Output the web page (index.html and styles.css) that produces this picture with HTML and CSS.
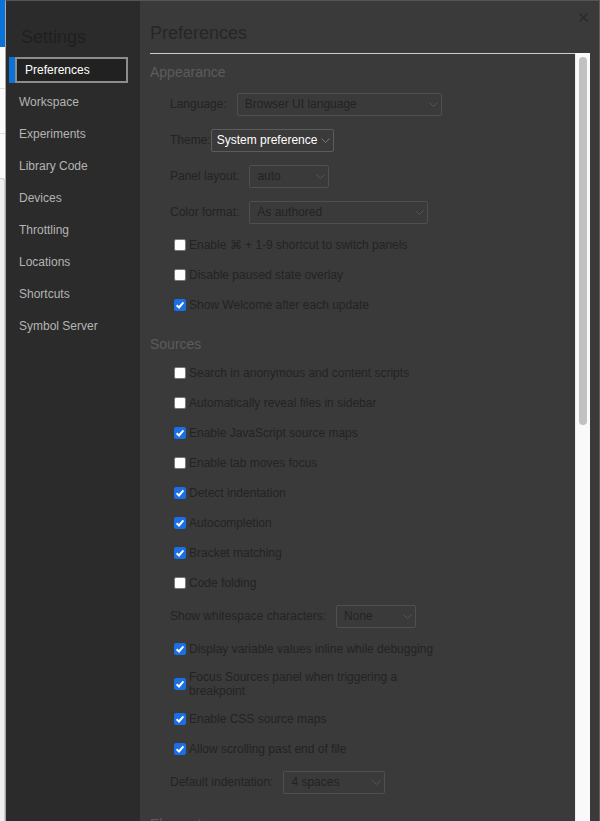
FILE: index.html
```html
<!DOCTYPE html>
<html lang="en">
<head>
<meta charset="utf-8">
<title>Settings</title>
<link rel="stylesheet" href="styles.css">
</head>
<body>
<div class="page-edge">
  <div class="edge-blue"></div>
  <div class="edge-rule"></div>
  <div class="edge-rule second"></div>
  <div class="edge-card"></div>
</div>
<div class="dialog">
  <nav class="sidebar">
    <div class="sidebar-title">Settings</div>
    <div class="nav-item selected"><span class="sel-bar"></span><span class="sel-box">Preferences</span></div>
    <div class="nav-item">Workspace</div>
    <div class="nav-item">Experiments</div>
    <div class="nav-item">Library Code</div>
    <div class="nav-item">Devices</div>
    <div class="nav-item">Throttling</div>
    <div class="nav-item">Locations</div>
    <div class="nav-item">Shortcuts</div>
    <div class="nav-item">Symbol Server</div>
  </nav>
  <main class="main">
    <div class="close" aria-label="Close">
      <svg width="9" height="9" viewBox="0 0 9 9"><path d="M0.5 0.5 L8.5 8.5 M8.5 0.5 L0.5 8.5" fill="none" stroke="currentColor" stroke-width="1.1"/></svg>
    </div>
    <h1 class="main-title">Preferences</h1>
    <div class="main-body">
      <div class="content">
        <section class="section">
          <h2 class="section-title">Appearance</h2>
          <div class="field"><span>Language:</span><div class="select sel-lang"><span>Browser UI language</span><svg width="9" height="5" viewBox="0 0 9 5"><path d="M0.5 0.5 L4.5 4.5 L8.5 0.5" fill="none" stroke="currentColor"/></svg></div></div>
          <div class="field tight"><span>Theme:</span><div class="select active sel-theme"><span>System preference</span><svg width="9" height="5" viewBox="0 0 9 5"><path d="M0.5 0.5 L4.5 4.5 L8.5 0.5" fill="none" stroke="currentColor"/></svg></div></div>
          <div class="field"><span>Panel layout:</span><div class="select sel-panel"><span>auto</span><svg width="9" height="5" viewBox="0 0 9 5"><path d="M0.5 0.5 L4.5 4.5 L8.5 0.5" fill="none" stroke="currentColor"/></svg></div></div>
          <div class="field"><span>Color format:</span><div class="select sel-color"><span>As authored</span><svg width="9" height="5" viewBox="0 0 9 5"><path d="M0.5 0.5 L4.5 4.5 L8.5 0.5" fill="none" stroke="currentColor"/></svg></div></div>
          <div class="check-row"><span class="cb"></span><span class="check-label">Enable ⌘ + 1-9 shortcut to switch panels</span></div>
          <div class="check-row"><span class="cb"></span><span class="check-label">Disable paused state overlay</span></div>
          <div class="check-row"><span class="cb on"><svg width="10" height="10" viewBox="0 0 10 10"><path d="M1.6 5.2 L4 7.5 L8.4 2.4" fill="none" stroke="#fff" stroke-width="2"/></svg></span><span class="check-label">Show Welcome after each update</span></div>
        </section>
        <section class="section">
          <h2 class="section-title">Sources</h2>
          <div class="check-row"><span class="cb"></span><span class="check-label">Search in anonymous and content scripts</span></div>
          <div class="check-row"><span class="cb"></span><span class="check-label">Automatically reveal files in sidebar</span></div>
          <div class="check-row"><span class="cb on"><svg width="10" height="10" viewBox="0 0 10 10"><path d="M1.6 5.2 L4 7.5 L8.4 2.4" fill="none" stroke="#fff" stroke-width="2"/></svg></span><span class="check-label">Enable JavaScript source maps</span></div>
          <div class="check-row"><span class="cb"></span><span class="check-label">Enable tab moves focus</span></div>
          <div class="check-row"><span class="cb on"><svg width="10" height="10" viewBox="0 0 10 10"><path d="M1.6 5.2 L4 7.5 L8.4 2.4" fill="none" stroke="#fff" stroke-width="2"/></svg></span><span class="check-label">Detect indentation</span></div>
          <div class="check-row"><span class="cb on"><svg width="10" height="10" viewBox="0 0 10 10"><path d="M1.6 5.2 L4 7.5 L8.4 2.4" fill="none" stroke="#fff" stroke-width="2"/></svg></span><span class="check-label">Autocompletion</span></div>
          <div class="check-row"><span class="cb on"><svg width="10" height="10" viewBox="0 0 10 10"><path d="M1.6 5.2 L4 7.5 L8.4 2.4" fill="none" stroke="#fff" stroke-width="2"/></svg></span><span class="check-label">Bracket matching</span></div>
          <div class="check-row"><span class="cb"></span><span class="check-label">Code folding</span></div>
          <div class="field"><span>Show whitespace characters:</span><div class="select sel-ws"><span>None</span><svg width="9" height="5" viewBox="0 0 9 5"><path d="M0.5 0.5 L4.5 4.5 L8.5 0.5" fill="none" stroke="currentColor"/></svg></div></div>
          <div class="check-row"><span class="cb on"><svg width="10" height="10" viewBox="0 0 10 10"><path d="M1.6 5.2 L4 7.5 L8.4 2.4" fill="none" stroke="#fff" stroke-width="2"/></svg></span><span class="check-label">Display variable values inline while debugging</span></div>
          <div class="check-row"><span class="cb on"><svg width="10" height="10" viewBox="0 0 10 10"><path d="M1.6 5.2 L4 7.5 L8.4 2.4" fill="none" stroke="#fff" stroke-width="2"/></svg></span><span class="check-label">Focus Sources panel when triggering a breakpoint</span></div>
          <div class="check-row"><span class="cb on"><svg width="10" height="10" viewBox="0 0 10 10"><path d="M1.6 5.2 L4 7.5 L8.4 2.4" fill="none" stroke="#fff" stroke-width="2"/></svg></span><span class="check-label">Enable CSS source maps</span></div>
          <div class="check-row"><span class="cb on"><svg width="10" height="10" viewBox="0 0 10 10"><path d="M1.6 5.2 L4 7.5 L8.4 2.4" fill="none" stroke="#fff" stroke-width="2"/></svg></span><span class="check-label">Allow scrolling past end of file</span></div>
          <div class="field"><span>Default indentation:</span><div class="select sel-indent"><span>4 spaces</span><svg width="9" height="5" viewBox="0 0 9 5"><path d="M0.5 0.5 L4.5 4.5 L8.5 0.5" fill="none" stroke="currentColor"/></svg></div></div>
        </section>
        <section class="section">
          <h2 class="section-title">Elements</h2>
        </section>
      </div>
      <div class="track"><div class="thumb"></div></div>
    </div>
  </main>
</div>
</body>
</html>
```
FILE: styles.css
```css
* { box-sizing: border-box; }
html, body { margin: 0; padding: 0; }
body {
  display: flex;
  height: 821px;
  overflow: hidden;
  font-family: "Liberation Sans", Arial, sans-serif;
  font-size: 12px;
  background: #3a3a3a;
}
.page-edge { width: 5px; flex: none; background: #fbfbfb; display: flex; flex-direction: column; }
.edge-blue { height: 47px; background: #0a72d8; }
.edge-rule { height: 42px; border-bottom: 1px solid #dcdcdc; }
.edge-rule.second { height: 45px; }
.edge-card { flex: 1; margin-top: 44px; background: #f0f0f0; border-top: 1px solid #cfcfcf; border-right: 1px solid #cfcfcf; border-top-right-radius: 3px; }

.dialog {
  flex: 1;
  display: flex;
  min-width: 0;
  border-top: 1px solid #555;
  border-left: 1px solid #a8a8a8;
  border-right: 1px solid #5e5e5e;
}
.sidebar { width: 134px; flex: none; background: #2b2b2b; }
.sidebar-title { padding: 25px 0 6px 15px; font-size: 18px; line-height: 22px; color: #1f1f1f; }
.nav-item { height: 32px; display: flex; align-items: center; padding-left: 13px; color: #b4b4b4; }
.nav-item.selected { padding: 3px 12px 3px 3px; align-items: stretch; }
.sel-bar { width: 6px; background: #0a72d8; }
.sel-box { flex: 1; display: flex; align-items: center; border: 2px solid #8d8d8d; background: #212121; color: #fff; padding-left: 8px; }

.main { flex: 1; position: relative; display: flex; flex-direction: column; min-width: 0; padding: 0 9px 0 10px; background: #3a3a3a; }
.close { position: absolute; top: 12px; right: 11px; width: 9px; height: 9px; color: #282828; display: flex; }
.main-title { margin: 0; height: 52px; padding-top: 21px; font-size: 18px; line-height: 22px; font-weight: normal; color: #262626; }
.main-body { flex: 1; display: flex; min-height: 0; }
.content { flex: 1; border-top: 1px solid #cdcdcd; padding-top: 9px; overflow: hidden; }
.track { width: 15px; flex: none; background: #f9f9f9; border-left: 1px solid #ececec; padding: 4px 0 0 3px; }
.thumb { width: 8px; height: 368px; border-radius: 4px; background: #c1c1c1; }

.section-title { margin: 0 0 5px; font-size: 14px; line-height: 18px; font-weight: normal; color: #5c5c5c; }
.section + .section .section-title { margin-top: 15px; }

.field { height: 36px; display: flex; align-items: center; gap: 10px; padding-left: 20px; color: #232323; }
.field.tight { gap: 0; }
.select {
  height: 23px;
  display: flex;
  align-items: center;
  justify-content: space-between;
  border: 1px solid #4f4f4f;
  border-radius: 2px;
  padding: 0 3px 0 7px;
  color: #232323;
}
.select svg { color: #555; flex: none; }
.select.active { color: #fff; border-color: #5c5c5c; padding-left: 5px; }
.select.active svg { color: #7a7a7a; }
.sel-lang { width: 205px; }
.sel-theme { width: 123px; }
.sel-panel { width: 80px; }
.sel-color { width: 179px; }
.sel-ws { width: 80px; }
.sel-indent { width: 102px; }

.check-row { display: flex; align-items: center; gap: 3px; min-height: 30px; padding: 6px 0 6px 24px; line-height: 14px; color: #232323; }
.cb { width: 12px; height: 12px; flex: none; border-radius: 2px; background: #fff; border: 1px solid #7a7a7a; }
.cb.on { background: #1a6ee6; border-color: #1a6ee6; display: flex; align-items: center; justify-content: center; }
.check-label { max-width: 255px; }
```
